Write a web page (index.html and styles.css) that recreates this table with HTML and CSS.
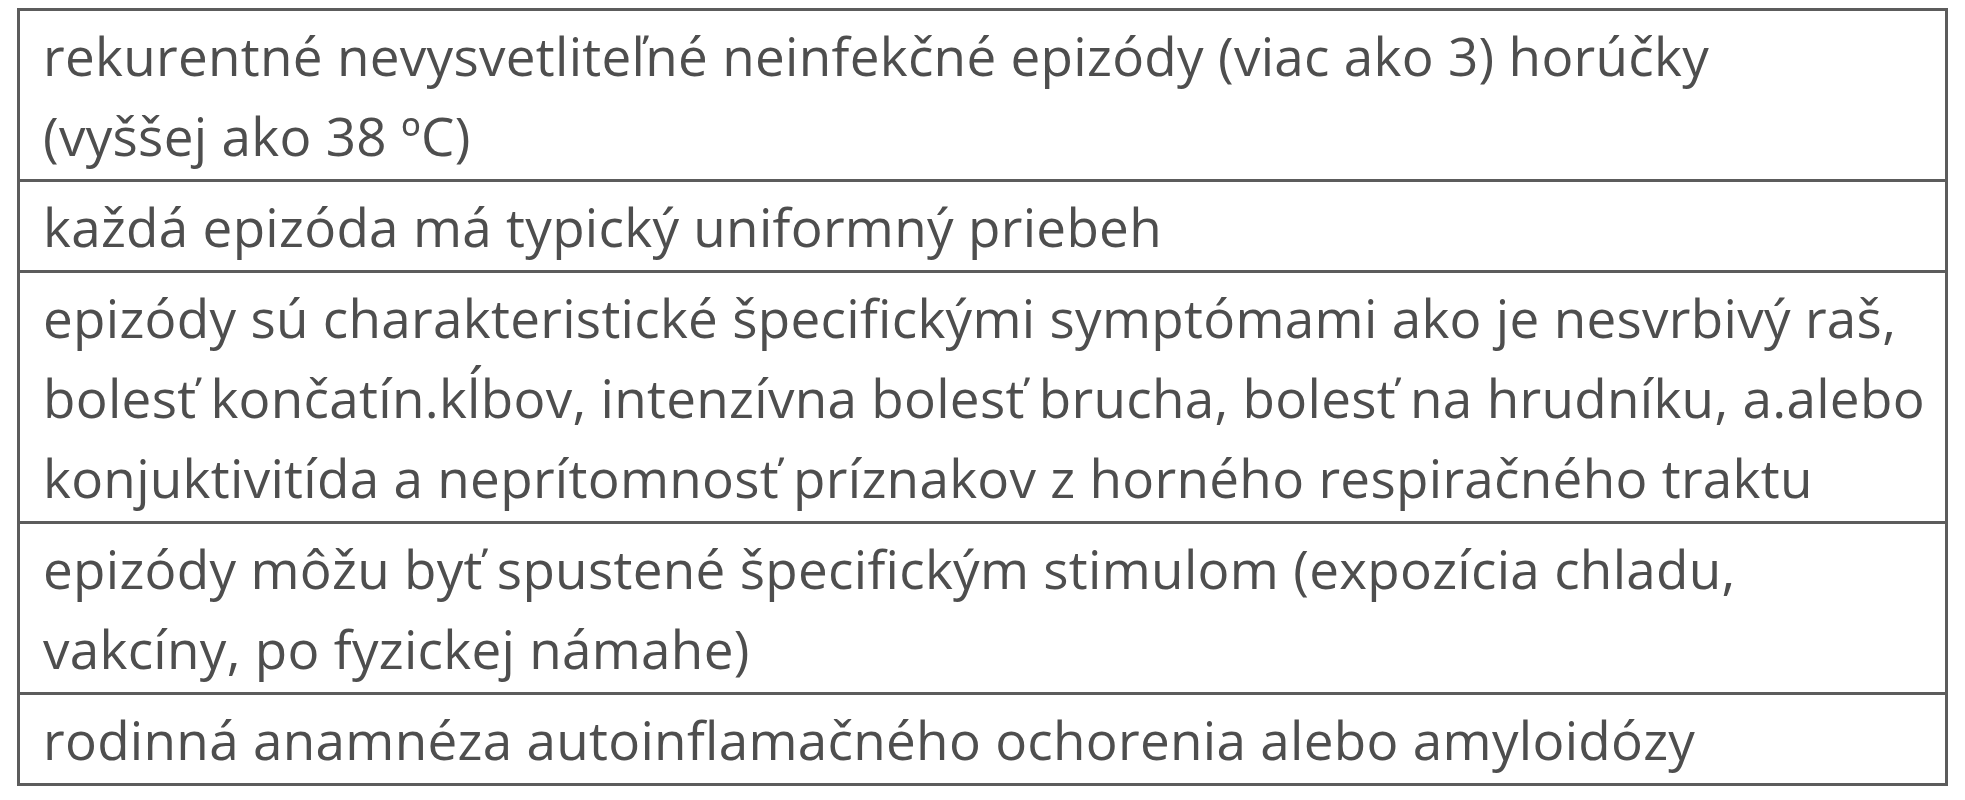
FILE: index.html
```html
<!DOCTYPE html>
<html lang="sk">
<head>
<meta charset="utf-8">
<title>Kritériá</title>
<link rel="stylesheet" href="styles.css">
</head>
<body>
<table class="criteria">
  <tbody>
    <tr><td>rekurentné nevysvetliteľné neinfekčné epizódy (viac ako 3) horúčky<br>(vyššej ako 38 ºC)</td></tr>
    <tr><td>každá epizóda má typický uniformný priebeh</td></tr>
    <tr><td>epizódy sú charakteristické špecifickými symptómami ako je nesvrbivý raš,<br>bolesť končatín.kĺbov, intenzívna bolesť brucha, bolesť na hrudníku, a.alebo<br>konjuktivitída a neprítomnosť príznakov z horného respiračného traktu</td></tr>
    <tr><td>epizódy môžu byť spustené špecifickým stimulom (expozícia chladu,<br>vakcíny, po fyzickej námahe)</td></tr>
    <tr><td>rodinná anamnéza autoinflamačného ochorenia alebo amyloidózy</td></tr>
  </tbody>
</table>
</body>
</html>
```
FILE: styles.css
```css
html, body {
  margin: 0;
  padding: 0;
  background: #ffffff;
}
body {
  padding: 8px 0 0 17px;
}
.criteria {
  border-collapse: collapse;
  width: 1927px;
  font-family: "Open Sans", "Noto Sans", sans-serif;
  font-size: 53px;
  letter-spacing: 0.3px;
  line-height: 80px;
  color: #4e4e4e;
}
.criteria td {
  border: 3px solid #5c5c5c;
  padding: 5px 20px 3px 23px;
  white-space: nowrap;
  text-align: left;
  vertical-align: top;
}
```
